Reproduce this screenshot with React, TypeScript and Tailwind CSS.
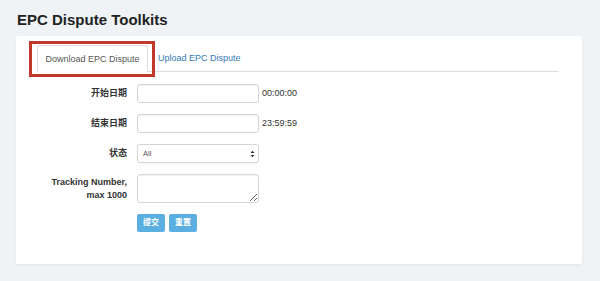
import React from "react";

const font = { fontFamily: '"Liberation Sans", Arial, "Noto Sans CJK SC", sans-serif' };

function Row({ label, children }: { label: React.ReactNode; children: React.ReactNode }) {
  return (
    <div className="flex items-center">
      <div className="w-[100px] pr-[10px] text-right text-[9px] font-bold leading-[13px] text-[#333]">
        {label}
      </div>
      {children}
    </div>
  );
}

export default function App() {
  return (
    <div
      className="w-[600px] h-[281px] bg-[#eff3f6] px-[16px] pt-[9px] overflow-hidden"
      style={font}
    >
      <h1 className="text-[15px] font-bold text-[#222] leading-[22px] pl-[1px]">
        EPC Dispute Toolkits
      </h1>

      <div className="mt-[5px] w-[566px] h-[228px] bg-white rounded-[2px] shadow-[0_1px_3px_rgba(0,0,0,0.06)] pl-[21px] pr-[23px] pt-[9px]">
        {/* tabs */}
        <div className="flex items-end border-b border-[#dddddd] h-[27px]">
          <div className="relative h-[27px] w-[111px] -mb-px border border-[#dddddd] border-b-white rounded-t-[3px] bg-white flex items-center justify-center pt-[3px] text-[9px] text-[#555]">
            Download EPC Dispute
            <div className="absolute -left-[9px] -top-[5px] w-[126px] h-[36px] border-[3px] border-[#c0392b]" />
          </div>
          <div className="h-[27px] flex items-center pl-[10px] pt-[3px] text-[9px] text-[#337ab7]">
            Upload EPC Dispute
          </div>
        </div>

        {/* form */}
        <div className="mt-[12px] flex flex-col gap-[11px]">
          <Row label="开始日期">
            <div className="w-[122px] h-[19px] border border-[#d5d5d5] rounded-[3px] shadow-[inset_0_1px_1px_rgba(0,0,0,0.05)]" />
            <span className="ml-[3px] text-[9px] text-[#333]">00:00:00</span>
          </Row>
          <Row label="结束日期">
            <div className="w-[122px] h-[19px] border border-[#d5d5d5] rounded-[3px] shadow-[inset_0_1px_1px_rgba(0,0,0,0.05)]" />
            <span className="ml-[3px] text-[9px] text-[#333]">23:59:59</span>
          </Row>
          <Row label="状态">
            <div className="w-[122px] h-[19px] border border-[#d5d5d5] rounded-[3px] flex items-center justify-between pl-[5px] pr-[3px] shadow-[0_1px_1px_rgba(0,0,0,0.04)]">
              <span className="text-[7.5px] text-[#555]">All</span>
              <svg width="5" height="8" viewBox="0 0 5 8">
                <path d="M0.5 3 L2.5 0.8 L4.5 3 Z" fill="#333" />
                <path d="M0.5 5 L2.5 7.2 L4.5 5 Z" fill="#333" />
              </svg>
            </div>
          </Row>
          <Row
            label={
              <>
                Tracking Number,
                <br />
                max 1000
              </>
            }
          >
            <textarea className="w-[122px] h-[29px] border border-[#d5d5d5] rounded-[3px] shadow-[inset_0_1px_1px_rgba(0,0,0,0.05)] outline-none" />
          </Row>
          <div className="flex pl-[100px] gap-[4px]">
            <button className="w-[28px] h-[18px] rounded-[2px] bg-[#5aaee0] text-white text-[8px] font-bold leading-none">
              提交
            </button>
            <button className="w-[28px] h-[18px] rounded-[2px] bg-[#5aaee0] text-white text-[8px] font-bold leading-none">
              重置
            </button>
          </div>
        </div>
      </div>
    </div>
  );
}
